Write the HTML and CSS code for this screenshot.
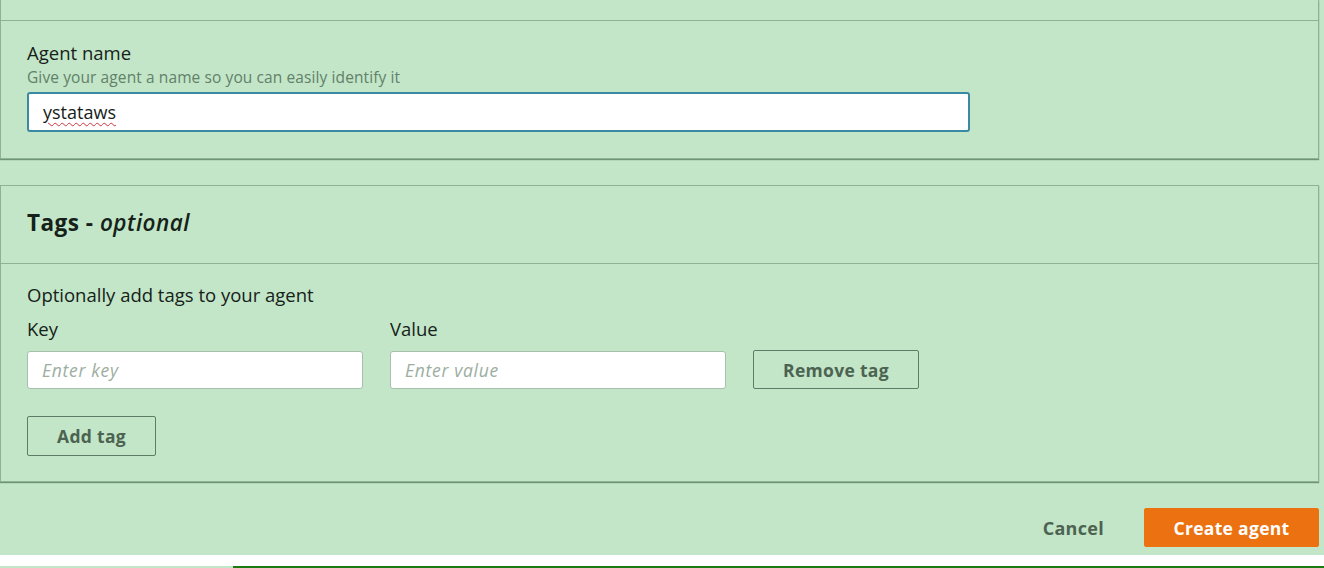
FILE: index.html
```html
<!DOCTYPE html>
<html lang="en">
<head>
<meta charset="utf-8">
<title>Create agent</title>
<link rel="stylesheet" href="styles.css">
</head>
<body>
<div class="page">
  <section class="card card--clipped">
    <div class="card-header card-header--clipped"></div>
    <div class="card-body">
      <div class="field-label">Agent name</div>
      <div class="field-desc">Give your agent a name so you can easily identify it</div>
      <div class="input input--focused"><span class="typed">ystataws</span></div>
    </div>
  </section>

  <section class="card card--tags">
    <div class="card-header">
      <h2 class="card-title">Tags - <i>optional</i></h2>
    </div>
    <div class="card-body card-body--tags">
      <div class="tags-intro">Optionally add tags to your agent</div>
      <div class="tag-row">
        <div class="tag-col">
          <div class="tag-label">Key</div>
          <div class="input input--small"><span class="placeholder">Enter key</span></div>
        </div>
        <div class="tag-col">
          <div class="tag-label">Value</div>
          <div class="input input--small"><span class="placeholder">Enter value</span></div>
        </div>
        <button class="btn btn--normal btn--remove">Remove tag</button>
      </div>
      <button class="btn btn--normal btn--add">Add tag</button>
    </div>
  </section>

  <div class="actions">
    <button class="btn btn--link">Cancel</button>
    <button class="btn btn--primary">Create agent</button>
  </div>
</div>
<div class="strip"></div>
<div class="bottom-bar"><div class="bar-light"></div><div class="bar-dark"></div></div>
</body>
</html>
```

FILE: styles.css
```css
* { box-sizing: border-box; }

html, body {
  margin: 0;
  padding: 0;
}

body {
  background: #c2e6c7;
  font-family: "Open Sans", "Noto Sans", sans-serif;
  color: #16211a;
  width: 1324px;
  height: 568px;
  overflow: hidden;
}

.page {
  width: 1319px;
  background: #c2e6c7;
  padding-bottom: 8px;
}

.card {
  border: 1px solid #8fb294;
  box-shadow: 0 1px 1px rgba(40, 80, 45, 0.55);
  background: #c2e6c7;
}

.card--clipped {
  border-top: 0;
}

.card-header {
  height: 78px;
  display: flex;
  align-items: center;
  padding: 0 26px;
  border-bottom: 1px solid #8fb294;
}

.card-header--clipped {
  height: 21px;
}

.card-title {
  margin: 0;
  font-size: 22.5px;
  font-weight: 700;
  line-height: 28px;
  letter-spacing: 0.5px;
  color: #16211a;
  padding-bottom: 4px;
}

.card-title i {
  font-weight: 600;
}

.card-body {
  padding: 20px 26px 26px 26px;
}

.field-label {
  font-size: 18.5px;
  line-height: 24px;
  color: #16211a;
}

.field-desc {
  font-size: 15.5px;
  line-height: 20px;
  color: #62806a;
  margin-top: 2px;
  letter-spacing: 0.1px;
}

.input {
  background: #fff;
  border: 1px solid #a9bfad;
  border-radius: 3px;
  display: flex;
  align-items: center;
  font-size: 18px;
}

.input--focused {
  margin-top: 5px;
  width: 943px;
  height: 40px;
  border: 2px solid #3b8aa3;
  padding-left: 14px;
}

.typed {
  color: #16211a;
  font-size: 18px;
  text-decoration: underline wavy #d0343a;
  text-decoration-thickness: 1px;
  text-underline-offset: 3px;
}

.card--tags {
  margin-top: 26px;
}

.card-body--tags {
  padding-top: 19px;
  padding-bottom: 25px;
}

.tags-intro {
  font-size: 18.5px;
  line-height: 24px;
}

.tag-row {
  display: flex;
  align-items: flex-end;
  gap: 27px;
  margin-top: 10px;
}

.tag-col {
  display: flex;
  flex-direction: column;
  gap: 10px;
}

.tag-label {
  font-size: 18.5px;
  line-height: 24px;
}

.input--small {
  width: 336px;
  height: 38px;
  padding-left: 14px;
}

.placeholder {
  color: #9cae9f;
  font-style: italic;
  font-size: 17.5px;
  letter-spacing: 0.7px;
}

.btn {
  font-family: inherit;
  font-weight: 700;
  font-size: 17.5px;
  cursor: pointer;
  border-radius: 2px;
  letter-spacing: 0.3px;
}

.btn--normal {
  background: transparent;
  border: 1px solid #5f7c66;
  color: #4d6352;
  height: 39px;
}

.btn--remove {
  width: 166px;
}

.btn--add {
  margin-top: 27px;
  width: 129px;
  height: 40px;
}

.actions {
  display: flex;
  justify-content: flex-end;
  align-items: center;
  gap: 20px;
  margin-top: 26px;
}

.btn--link {
  background: transparent;
  border: 0;
  color: #4d6352;
  height: 39px;
  padding: 0 20px;
  font-size: 18px;
}

.btn--primary {
  background: #ec7211;
  border: 1px solid #ec7211;
  color: #fff;
  width: 175px;
  height: 39px;
}

.strip {
  height: 11px;
  background: #fff;
}

.bottom-bar {
  display: flex;
  height: 3px;
}

.bar-light {
  width: 233px;
  background: #c2e6c7;
}

.bar-dark {
  flex: 1;
  background: #1b7a12;
}
```
